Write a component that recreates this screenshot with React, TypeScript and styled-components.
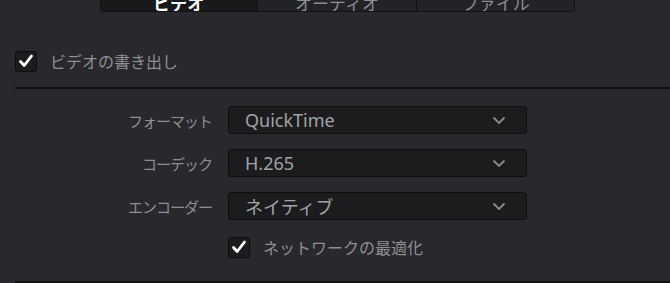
import React from 'react';
import styled, { createGlobalStyle } from 'styled-components';

const GlobalStyle = createGlobalStyle`
  html, body {
    margin: 0;
    padding: 0;
    background: #28282d;
  }
  body {
    font-family: "Noto Sans", "Noto Sans CJK JP", sans-serif;
  }
`;

const Panel = styled.div`
  width: 670px;
  height: 283px;
  overflow: hidden;
  background: #28282d;
  display: flex;
  flex-direction: column;
`;

const TabBar = styled.div`
  display: flex;
  margin: -8px 0 0 100px;
  width: 475px;
  height: 26px;
  border: 1px solid #121214;
  border-radius: 0 0 3px 3px;
  overflow: hidden;
  box-sizing: border-box;
`;

const Tab = styled.div<{ $active?: boolean; $w: number }>`
  width: ${(p) => p.$w}px;
  display: flex;
  align-items: center;
  justify-content: center;
  font-size: 17px;
  font-weight: ${(p) => (p.$active ? 600 : 400)};
  color: ${(p) => (p.$active ? '#ffffff' : '#8c8e92')};
  background: ${(p) => (p.$active ? '#18191b' : '#222326')};
  border-left: ${(p) => (p.$active ? 'none' : '1px solid #121214')};
`;

const Section = styled.div`
  padding-left: 15px;
  display: flex;
  flex-direction: column;
`;

const CheckRow = styled.label<{ $indent?: number }>`
  display: flex;
  align-items: center;
  gap: 13px;
  margin-left: ${(p) => p.$indent ?? 0}px;
  font-size: 16px;
  color: #8d8f93;
`;

const Box = styled.span`
  width: 22px;
  height: 21px;
  box-sizing: border-box;
  border: 1px solid #0e0e10;
  border-radius: 3px;
  background: #1c1c1f;
  display: flex;
  align-items: center;
  justify-content: center;
`;

const Divider = styled.div`
  height: 2px;
  background: #111113;
`;

const Form = styled.div`
  display: grid;
  grid-template-columns: 197px 299px;
  column-gap: 16px;
  row-gap: 15px;
  align-items: center;
`;

const Label = styled.div`
  text-align: right;
  font-size: 15px;
  letter-spacing: -1px;
  color: #8d8f93;
`;

const Select = styled.div`
  height: 28px;
  box-sizing: border-box;
  border: 1px solid #0e0e10;
  border-radius: 3px;
  background: #1c1c1e;
  display: flex;
  align-items: center;
  justify-content: space-between;
  padding: 0 20px 0 16px;
  font-size: 18px;
  color: #a1a3a6;
`;

const Check = () => (
  <svg width="16" height="14" viewBox="0 0 16 14">
    <path d="M2.5 7.5 L6.2 11.5 L13.5 2" fill="none" stroke="#ffffff" strokeWidth="2.8" strokeLinecap="round" strokeLinejoin="round" />
  </svg>
);

const Chevron = () => (
  <svg width="14" height="9" viewBox="0 0 14 9">
    <path d="M1.5 1.5 L7 7 L12.5 1.5" fill="none" stroke="#8a8c90" strokeWidth="1.8" />
  </svg>
);

const CheckBox = ({ children, indent }: { children: React.ReactNode; indent?: number }) => (
  <CheckRow $indent={indent}>
    <Box>
      <Check />
    </Box>
    {children}
  </CheckRow>
);

const rows = [
  { label: 'フォーマット', value: 'QuickTime' },
  { label: 'コーデック', value: 'H.265' },
  { label: 'エンコーダー', value: 'ネイティブ' },
];

export default function App() {
  return (
    <>
      <GlobalStyle />
      <Panel>
        <TabBar>
          <Tab $active $w={157}>ビデオ</Tab>
          <Tab $w={160}>オーディオ</Tab>
          <Tab $w={158}>ファイル</Tab>
        </TabBar>
        <Section>
          <div style={{ height: 37 }} />
          <CheckBox>ビデオの書き出し</CheckBox>
          <div style={{ height: 14 }} />
          <Divider />
          <div style={{ height: 17 }} />
          <Form>
            {rows.map((r) => (
              <React.Fragment key={r.label}>
                <Label>{r.label}</Label>
                <Select>
                  <span>{r.value}</span>
                  <Chevron />
                </Select>
              </React.Fragment>
            ))}
          </Form>
          <div style={{ height: 15 }} />
          <CheckBox indent={213}>ネットワークの最適化</CheckBox>
          <div style={{ height: 22 }} />
          <Divider />
        </Section>
      </Panel>
    </>
  );
}
